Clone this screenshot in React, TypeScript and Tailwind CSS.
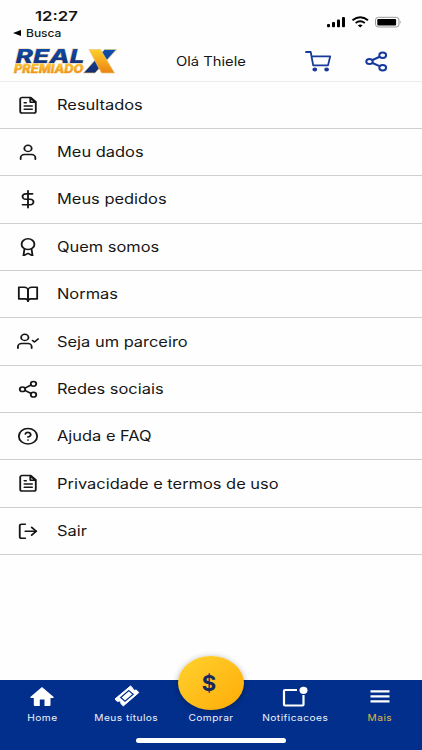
import type { ComponentType, ReactNode, SVGProps } from "react";
import { FiAward, FiBookOpen, FiDollarSign, FiHelpCircle, FiLogOut, FiShare2, FiUser, FiUserCheck } from "react-icons/fi";

type Icon = ComponentType<SVGProps<SVGSVGElement>>;

function FileIcon(props: SVGProps<SVGSVGElement>) {
  return (
    <svg viewBox="0 0 24 24" fill="none" stroke="currentColor" strokeWidth="2" strokeLinecap="round" strokeLinejoin="round" {...props}>
      <path d="M15 2H5.5A2 2 0 0 0 3.5 4V20a2 2 0 0 0 2 2h13a2 2 0 0 0 2-2V7.5z" />
      <path d="M14.5 2.5V8h5.5zM8 13h8.5M8 17.3h8.5M8 8.8h2" />
    </svg>
  );
}

const rows: { label: string; icon: Icon }[] = [
  { label: "Resultados", icon: FileIcon },
  { label: "Meu dados", icon: FiUser as Icon },
  { label: "Meus pedidos", icon: FiDollarSign as Icon },
  { label: "Quem somos", icon: FiAward as Icon },
  { label: "Normas", icon: FiBookOpen as Icon },
  { label: "Seja um parceiro", icon: FiUserCheck as Icon },
  { label: "Redes sociais", icon: FiShare2 as Icon },
  { label: "Ajuda e FAQ", icon: FiHelpCircle as Icon },
  { label: "Privacidade e termos de uso", icon: FileIcon },
  { label: "Sair", icon: FiLogOut as Icon },
];

function Logo() {
  return (
    <svg className="ml-[13px] mt-[5px] h-[30px] w-[106px] shrink-0 overflow-visible" viewBox="0 0 106 30">
      <defs>
        <linearGradient id="gold" x1="0" y1="0" x2="0" y2="1">
          <stop offset="0" stopColor="#ffd02c" />
          <stop offset="1" stopColor="#ec8212" />
        </linearGradient>
        <linearGradient id="blue" x1="0" y1="0" x2="0" y2="1">
          <stop offset="0" stopColor="#0b50b2" />
          <stop offset="1" stopColor="#162b6c" />
        </linearGradient>
      </defs>
      <g fontFamily="Inter, sans-serif" fontStyle="italic" fontWeight="800">
        <text x="2.5" y="16.4" fontSize="18.8" textLength="69" lengthAdjust="spacingAndGlyphs" fill="url(#blue)" stroke="#e8cf95" strokeWidth="0.8" paintOrder="stroke">REAL</text>
        <text x="1" y="26" fontSize="11.6" textLength="69.5" lengthAdjust="spacingAndGlyphs" fill="url(#gold)" stroke="#d9952a" strokeWidth="0.4" paintOrder="stroke">PREMIADO</text>
      </g>
      <path d="M91.5 2.5H103.5L82 26H70.5z" fill="url(#blue)" stroke="#e6c77a" strokeWidth="0.7" />
      <path d="M76 2.5H87.5L101.5 26H88.5z" fill="url(#gold)" stroke="#e6c77a" strokeWidth="0.7" />
    </svg>
  );
}

function StatusBar() {
  return (
    <div className="flex h-[42px] shrink-0 justify-between">
      <div className="flex flex-col pt-[8px]">
        <span className="ml-[35px] origin-left scale-x-[1.24] self-start text-[13.5px] font-semibold leading-4">12:27</span>
        <span className="ml-[13px] mt-[3px] flex items-center gap-[5px]">
          <svg className="h-[6px] w-[8px]" viewBox="0 0 8 6"><path d="M0 3L8 0V6z" /></svg>
          <span className="origin-left scale-x-[1.2] text-[10px] font-medium leading-3">Busca</span>
        </span>
      </div>
      <svg className="mr-[9px] mt-[14px] h-[16px] w-[88px]" viewBox="0 0 88 16">
        <rect x="2" y="10" width="3" height="3.2" rx="1" />
        <rect x="7" y="8" width="3" height="5.2" rx="1" />
        <rect x="12" y="5.5" width="3" height="7.7" rx="1" />
        <rect x="17" y="3" width="3" height="10.2" rx="1" />
        <g fill="none" stroke="#000" strokeWidth="1.9">
          <path d="M27.5 6.2Q35.2 .1 43 6.2M30.6 9Q35.2 5.6 39.8 9" />
        </g>
        <path d="M32.8 11.2Q35.2 9.6 37.6 11.2L35.2 13.4z" />
        <rect x="50.5" y="3.3" width="23.5" height="9.7" rx="2.8" fill="none" stroke="#999" strokeWidth="1" />
        <rect x="52.3" y="5" width="18.8" height="6.4" rx="1" />
        <path d="M75.3 6.5Q77 8.1 75.3 9.8z" fill="#999" />
      </svg>
    </div>
  );
}

function Tab({ label, labelClass = "text-[#eef2fb]", children }: { label: string; labelClass?: string; children?: ReactNode }) {
  return (
    <div className="flex flex-1 flex-col items-center">
      <div className="flex h-[32px] items-end justify-center pb-px">{children}</div>
      <span className={"whitespace-nowrap text-[9px] leading-3 tracking-[0.4px] scale-x-[1.13] " + labelClass}>{label}</span>
    </div>
  );
}

export default function App() {
  return (
    <div className="flex h-[750px] w-[422px] flex-col overflow-hidden bg-[#fefefe] font-['Inter',sans-serif] text-[#161616]">
      <StatusBar />
      <header className="flex h-[39.6px] shrink-0 border-b border-[#ebebeb]">
        <Logo />
        <span className="ml-[57px] mt-[12px] w-[147px] text-[12.5px] leading-4 -mr-[18px]">
          <span className="inline-block origin-left scale-x-[1.18] whitespace-nowrap">Olá Thiele</span>
        </span>
        <svg className="mt-[8px] h-[24px] w-[28px]" viewBox="0 0 28 24" fill="none" stroke="#17399b" strokeWidth="1.8" strokeLinecap="round" strokeLinejoin="round">
          <path d="M1 2H5.7L8.2 15.4H23L25.2 6.4H6.6" />
          <ellipse cx="9.8" cy="19.5" rx="1.5" ry="1" fill="#17399b" />
          <ellipse cx="21.6" cy="19.5" rx="1.5" ry="1" fill="#17399b" />
        </svg>
        <svg className="ml-[32px] mt-[8px] h-[24px] w-[24px]" viewBox="0 0 24 24" fill="none" stroke="#17399b" strokeWidth="2">
          <path d="M7.5 10L15.2 6.5M7.5 13L15.2 16.3" />
          <ellipse cx="4.5" cy="11.5" rx="3.2" ry="2.6" />
          <ellipse cx="17.7" cy="5.3" rx="3.4" ry="2.7" />
          <ellipse cx="17.7" cy="17.7" rx="3.4" ry="2.7" />
        </svg>
      </header>
      <main className="flex-1">
        {rows.map(({ label, icon: RowIcon }, i) => (
          <div key={i} className="flex h-[47.37px] items-center border-b border-[#cfcfcf] pl-[17.4px]">
            <RowIcon preserveAspectRatio="none" className="h-[18.5px] w-[22px] shrink-0" />
            <span className="ml-[17.5px] origin-left scale-x-[1.173] whitespace-nowrap text-[14px] leading-5">{label}</span>
          </div>
        ))}
      </main>
      <nav className="relative flex h-[70px] shrink-0 bg-[#022f8b]">
        <Tab label="Home">
          <svg className="mb-[5px] h-[19px] w-[24px]" viewBox="0 0 24 19" fill="white"><path d="M12 0L24 10.2 23 11H20.5V18Q20.5 19 19.5 19H14.5V12.5H9.8V19H4.8Q3.8 19 3.8 18V11H1L0 10.2z" /></svg>
        </Tab>
        <Tab label="Meus títulos">
          <svg className="mb-[4px] h-[22px] w-[26px]" viewBox="0 0 26 22">
            <path d="M16.5 1L18.7 3Q18.3 4.8 20.5 5.3L22.3 5 24.8 7.6 9.3 20.9 6.9 18.6Q7.3 16.8 5.3 16.1L3.2 16.4 1 14z" fill="white" stroke="white" strokeLinejoin="round" />
            <path d="M14.8 5.6L19.2 9.3 11 16.2 6.7 12.5z" fill="none" stroke="#022f8b" strokeWidth="1.2" />
          </svg>
        </Tab>
        <Tab label="Comprar" />
        <Tab label="Notificacoes">
          <svg className="mb-[3px] h-[22px] w-[26px]" viewBox="0 0 26 22">
            <path d="M15 4H3Q2 4 2 5V18.5Q2 19.5 3 19.5H20.5Q21.5 19.5 21.5 18.5V9" fill="none" stroke="white" strokeWidth="2.2" />
            <ellipse cx="21.5" cy="4.3" rx="4" ry="3.6" fill="white" />
          </svg>
        </Tab>
        <Tab label="Mais" labelClass="text-[#e0b848]">
          <svg className="mb-[8px] h-[13px] w-[20px]" viewBox="0 0 20 13"><path d="M.5 1.3H19.5M.5 6.3H19.5M.5 11.3H19.5" stroke="white" strokeWidth="2.2" /></svg>
        </Tab>
        <div className="absolute -top-[24px] left-[178px] flex h-[54px] w-[66px] items-center justify-center rounded-[50%] bg-linear-to-br from-[#ffd22c] to-[#ffab00] pr-[4px] shadow-[0_1px_6px_rgba(0,0,0,0.3)]">
          <span className="scale-x-[1.05] text-[21px] font-bold leading-none text-[#14295f]">$</span>
        </div>
        <div className="absolute left-[136px] top-[58px] h-[5px] w-[150px] rounded-full bg-white" />
      </nav>
    </div>
  );
}
